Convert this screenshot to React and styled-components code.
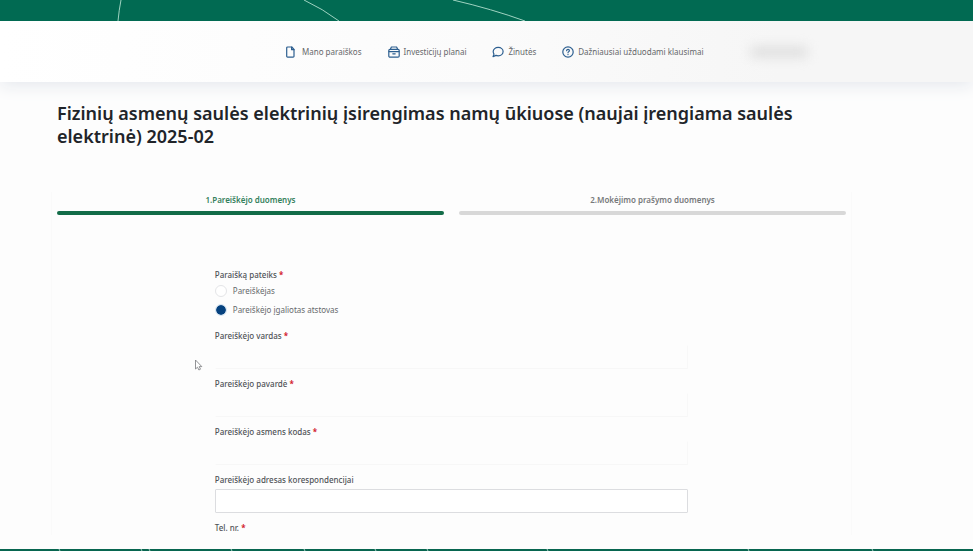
import React, { useState } from 'react';
import styled, { createGlobalStyle, css } from 'styled-components';

const App = () => {
  const [applicant, setApplicant] = useState('representative');

  return (
    <Page>
      <GlobalStyle />
      <Banner>
        <svg width="560" height="21" viewBox="0 0 560 21" fill="none" stroke="#9fd3c1" aria-hidden="true">
          <path d="M121 0Q119 10 118 21" />
          <path d="M304 0Q323 9 339 21" />
          <path d="M453 0Q492 9 525 21" />
        </svg>
      </Banner>
      <Header>
        <Nav>
          <NavLink href="#applications" wide>
            <FileIcon />
            Mano paraiškos
          </NavLink>
          <NavLink href="#plans">
            <CaseIcon />
            Investicijų planai
          </NavLink>
          <NavLink href="#messages">
            <BubbleIcon />
            Žinutės
          </NavLink>
          <NavLink href="#faq">
            <QuestionIcon />
            Dažniausiai užduodami klausimai
          </NavLink>
          <HiddenUser />
        </Nav>
      </Header>
      <Main>
        <Title>
          Fizinių asmenų saulės elektrinių įsirengimas namų ūkiuose (naujai įrengiama saulės
          elektrinė) 2025-02
        </Title>
        <Card>
          <Steps>
            <Step active>1.Pareiškėjo duomenys</Step>
            <Step>2.Mokėjimo prašymo duomenys</Step>
          </Steps>
          <Form onSubmit={e => e.preventDefault()}>
            <RadioGroup>
              <Legend>
                Paraišką pateiks <Required>*</Required>
              </Legend>
              <RadioLabel>
                <Radio
                  name="applicant"
                  checked={applicant === 'self'}
                  onChange={() => setApplicant('self')}
                />
                Pareiškėjas
              </RadioLabel>
              <RadioLabel>
                <Radio
                  name="applicant"
                  checked={applicant === 'representative'}
                  onChange={() => setApplicant('representative')}
                />
                Pareiškėjo įgaliotas atstovas
              </RadioLabel>
            </RadioGroup>
            <Field id="firstName" label="Pareiškėjo vardas" required faint />
            <Field id="lastName" label="Pareiškėjo pavardė" required faint />
            <Field id="personalCode" label="Pareiškėjo asmens kodas" required faint />
            <Field id="address" label="Pareiškėjo adresas korespondencijai" />
            <Label as="span">
              Tel. nr. <Required>*</Required>
            </Label>
          </Form>
        </Card>
      </Main>
      <Footer>
        <svg width="973" height="2" viewBox="0 0 973 2" stroke="#a5cfc2" aria-hidden="true">
          {[59, 141, 149, 231, 304, 375, 427, 547, 748, 872].map(x => (
            <path key={x} d={`M${x} 0L${x + 1} 2`} />
          ))}
        </svg>
      </Footer>
      <Pointer viewBox="0 0 9 12" aria-hidden="true">
        <path d="M1.5 1v9l2-1.8 1.4 2.8 1.6-.8-1.3-2.6h2.6z" />
      </Pointer>
    </Page>
  );
};

const Field = ({ id, label, required, faint }) => (
  <FieldBox>
    <Label htmlFor={id}>
      {label} {required && <Required>*</Required>}
    </Label>
    <Input id={id} type="text" $faint={faint} />
  </FieldBox>
);

const FileIcon = () => (
  <Icon viewBox="0 0 12 12">
    <path d="M2.6 1h4.2L9 3.4v6.8a.9.9 0 0 1-.9.9H2.6a.9.9 0 0 1-.9-.9V1.9A.9.9 0 0 1 2.6 1z" />
    <path d="M6.6 1.2v2.5H9" />
  </Icon>
);

const CaseIcon = () => (
  <Icon viewBox="0 0 12 12">
    <rect x="0.8" y="3.4" width="10.4" height="7.8" rx="1.2" />
    <path d="M2.4 3.2L3.4 1h5.2l1 2.2M1 5.6h10M4.8 7.8h2.4" />
  </Icon>
);

const BubbleIcon = () => (
  <Icon viewBox="0 0 12 12">
    <path d="M6.2 1.4c2.8 0 4.9 1.8 4.9 4.2s-2.1 4.2-4.9 4.2c-.8 0-1.5-.1-2.2-.4L1 10.6l1-2.5c-.5-.7-.8-1.600-.8-2.500 0-2.400 2.200-4.200 5-4.200z" />
  </Icon>
);

const QuestionIcon = () => (
  <Icon viewBox="0 0 12 12">
    <circle cx="6" cy="6" r="5.2" />
    <path d="M4.6 4.7c.1-1.7 2.8-1.7 2.8 0 0 .9-1.4 1-1.4 2M6 8.400v.2" />
  </Icon>
);

const GlobalStyle = createGlobalStyle`
  * {
    box-sizing: border-box;
  }

  body {
    margin: 0;
    background: #fdfdfd;
    font-family: 'Noto Sans', 'Open Sans', sans-serif;
    font-size: 8px;
    color: #66696c;
  }
`;

const Page = styled.div`
  position: relative;
  display: flex;
  flex-direction: column;
  min-height: 100vh;
`;

const Banner = styled.div`
  position: relative;
  z-index: 1;
  height: 21px;
  overflow: hidden;
  background: #016a52;

  svg {
    display: block;
  }
`;

const Header = styled.header`
  padding: 22px 0 22px 285px;
  background: linear-gradient(90deg, #ffffff, #fbfbfb 50%, #f6f6f6 80%);
  box-shadow: 0 4px 16px #e6e9ee;
`;

const Nav = styled.nav`
  display: flex;
  align-items: center;
  gap: 26px;
`;

const NavLink = styled.a.withConfig({ shouldForwardProp: prop => prop !== 'wide' })`
  display: flex;
  align-items: center;
  gap: ${({ wide }) => (wide ? 5 : 4)}px;
  line-height: 17px;
  color: #66686b;
  text-decoration: none;
  white-space: nowrap;
`;

const Icon = styled.svg`
  width: 12px;
  height: 12px;
  flex: none;
  fill: none;
  stroke: #2d5f90;
  stroke-width: 1.2;
  stroke-linecap: round;
  stroke-linejoin: round;
`;

const HiddenUser = styled.div`
  width: 56px;
  height: 10px;
  margin-left: 22px;
  background: #dcdcdc;
  filter: blur(6px);
`;

const Main = styled.main`
  flex: 1;
  width: 100%;
  max-width: 903px;
  padding: 20px 57px 0;
  position: relative;
`;

const Title = styled.h1`
  margin: 0;
  font-size: 18px;
  line-height: 23px;
  font-weight: 600;
  color: #212429;
`;

const Card = styled.section`
  margin: 44px -6px 0;
  padding: 0 5px;
  border: solid #fafafa;
  border-width: 0 1px;
`;

const Steps = styled.div`
  display: flex;
  gap: 15px;
`;

const Step = styled.div.withConfig({ shouldForwardProp: prop => prop !== 'active' })`
  flex: 1;
  text-align: center;
  line-height: 16px;
  font-weight: 600;
  color: #77797b;

  &::after {
    content: '';
    display: block;
    height: 4px;
    margin-top: 3px;
    border-radius: 2px;
    background: #d8d8d8;
  }

  ${({ active }) => active && css`
    color: #34805c;

    &::after {
      background: #136c48;
    }
  `}
`;

const Form = styled.form`
  width: 60%;
  margin: 53px auto 0;
`;

const RadioGroup = styled.fieldset`
  margin: 0 0 11px;
  padding: 0;
  border: 0;
`;

const Label = styled.label`
  display: block;
  line-height: 14px;
  font-weight: 500;
  color: #505357;
`;

const Legend = styled(Label).attrs({ as: 'legend' })`
  padding: 0;
  margin-bottom: 1px;
`;

const Required = styled.span`
  color: #d3202d;
  font-weight: 700;
`;

const RadioLabel = styled.label`
  display: flex;
  align-items: center;
  gap: 6px;
  line-height: 16px;

  & + & {
    margin-top: 3px;
  }
`;

const Radio = styled.input.attrs({ type: 'radio' })`
  appearance: none;
  width: 12px;
  height: 12px;
  margin: 0;
  border: 1px solid #e4e5e7;
  border-radius: 50%;
  background: #ffffff;

  &:checked {
    border-color: #d5e4f2;
    background: #06427f;
    background-clip: padding-box;
  }
`;

const FieldBox = styled.div`
  margin-bottom: 8px;
`;

const Input = styled.input`
  display: block;
  width: 100%;
  height: 24px;
  margin-top: 2px;
  padding: 0 6px;
  font: inherit;
  color: inherit;
  background: #ffffff;
  border: 1px solid #dcdde0;
  border-radius: 1px;
  outline: none;

  ${({ $faint }) => $faint && css`
    background: transparent;
    border-color: transparent #f8f8f8 #f7f7f7 transparent;
  `}
`;

const Footer = styled.footer`
  height: 2px;
  overflow: hidden;
  background: #086650;

  svg {
    display: block;
  }
`;

const Pointer = styled.svg`
  position: absolute;
  left: 194px;
  top: 359px;
  width: 9px;
  height: 12px;
  fill: #ffffff;
  stroke: #77797c;
  stroke-width: 0.8;
`;

export default App;
